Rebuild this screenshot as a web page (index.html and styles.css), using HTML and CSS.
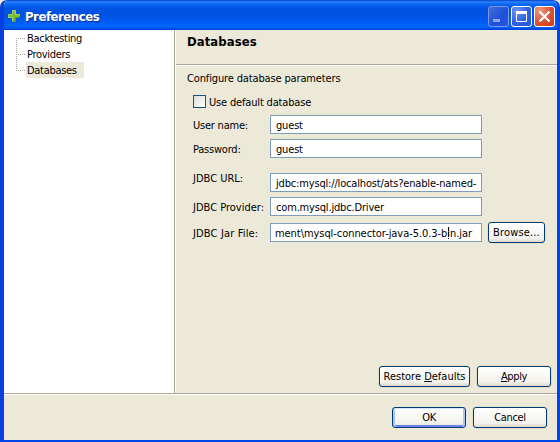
FILE: index.html
```
<!DOCTYPE html>
<html lang="en">
<head>
<meta charset="utf-8">
<title>Preferences</title>
<link rel="stylesheet" href="styles.css">
</head>
<body>
<div class="window">
  <header class="titlebar">
    <svg class="logo" width="12" height="12" viewBox="0 0 12 12"><path d="M4.5 .5h3v4h4v3h-4v4h-3v-4h-4v-3h4z" fill="#79bd37" stroke="#a2d466"/><path d="M5 11.5h2.5v-4h4V6" fill="none" stroke="#4c8e36"/></svg>
    <h1>Preferences</h1>
    <div class="controls">
      <span class="control disabled"><svg width="21" height="21"><rect x="5" y="13" width="7" height="3" fill="#91a6ee"/></svg></span>
      <span class="control"><svg width="21" height="21"><path d="M5.5 6v9.5h10V6" fill="none" stroke="#fff"/><path d="M5 5h11v3H5z" fill="#fff"/></svg></span>
      <span class="control close"><svg width="21" height="21"><path d="M5.5 5.5l10 10m0-10l-10 10" stroke="#fff" stroke-width="2.2"/></svg></span>
    </div>
  </header>
  <div class="main">
    <nav class="tree">
      <div class="node first"><span>Backtesting</span></div>
      <div class="node"><span>Providers</span></div>
      <div class="node last"><span class="selected">Databases</span></div>
    </nav>
    <section class="page">
      <h2>Databases</h2>
      <div class="body">
        <p class="intro">Configure database parameters</p>
        <div class="check"><i class="box"></i><span>Use default database</span></div>
        <div class="row user"><label>User name:</label><div class="field">guest</div></div>
        <div class="row pass"><label>Password:</label><div class="field">guest</div></div>
        <div class="row url"><label>JDBC URL:</label><div class="field">jdbc:mysql://localhost/ats?enable-named-</div></div>
        <div class="row prov"><label>JDBC Provider:</label><div class="field">com.mysql.jdbc.Driver</div></div>
        <div class="row jar"><label>JDBC Jar File:</label><div class="field">ment\mysql-connector-java-5.0.3-bin.jar<i class="caret"></i></div><div class="button browse">Browse...</div></div>
        <div class="actions"><div class="button restore">Restore <u>D</u>efaults</div><div class="button"><u>A</u>pply</div></div>
      </div>
    </section>
  </div>
  <footer><div class="button default">OK</div><div class="button">Cancel</div></footer>
</div>
</body>
</html>
```
FILE: styles.css
```
* { box-sizing: border-box; }
body { margin: 0; background: #ece9d8; font: 11px/16px "DejaVu Sans Condensed", "DejaVu Sans", sans-serif; font-stretch: condensed; color: #000; letter-spacing: -.35px; }
h1, h2, p { margin: 0; }
.window { width: 560px; height: 442px; display: flex; flex-direction: column; overflow: hidden; background: #ece9d8; border: solid #0045e6; border-width: 0 3px 2px 4px; border-left-color: #0a3fdf; border-radius: 7px 7px 0 0; }
.titlebar { height: 30px; flex: none; margin: 0 -3px 0 -4px; padding: 6px 5px 0 8px; display: flex; background: linear-gradient(#0043d0 0, #2e83f7 2px, #0a6af5 4px, #0054e5 8px, #0053e0 15px, #005cf5 22px, #0066ff 26px, #005af0 28px, #003dd7 30px); }
.logo { margin-top: 4px; }
h1 { margin-left: 5px; font: bold 13px/21px "DejaVu Sans Condensed", "DejaVu Sans", sans-serif; font-stretch: condensed; letter-spacing: -.45px; color: #fff; text-shadow: 1px 1px #0a2f99; }
.controls { margin-left: auto; display: flex; gap: 2px; }
.control { position: relative; width: 21px; height: 21px; border: 1px solid #fff; border-radius: 3px; background: radial-gradient(circle at 25% 20%, #7195f0, #2f60df 55%, #2459dc); }
.control svg { position: absolute; left: -1px; top: -1px; }
.disabled { border-color: #8197e6; background: linear-gradient(135deg, #456edd, #1c4fd9 60%, #2859e0); }
.close { background: radial-gradient(circle at 25% 20%, #ed9a83, #dc5030 55%, #cf3c17); }
.main { height: 363px; display: flex; }
.tree { width: 171px; flex: none; background: #fff; border-right: 1px solid #aca899; padding-left: 12px; }
.node { height: 16px; display: flex; background: repeating-linear-gradient(90deg, #aca899 0 1px, transparent 1px 2px) 0 8px / 10px 1px no-repeat, repeating-linear-gradient(#aca899 0 1px, transparent 1px 2px) 0 0 / 1px 16px no-repeat; padding-left: 10px; line-height: 18px; letter-spacing: -.3px; }
.first { background-position: 0 8px, 0 8px; }
.last { background-size: 10px 1px, 1px 8px; }
.node span { height: 16px; padding-left: 1px; }
.node .selected { width: 58px; background: #ece9d8; }
.page { flex: 1; border-left: 1px solid #fff; }
h2 { height: 35px; border-bottom: 1px solid #aca899; box-shadow: 0 1px #fff; padding: 4px 0 0 11px; font: bold 13px/16px "DejaVu Sans Condensed", "DejaVu Sans", sans-serif; font-stretch: condensed; letter-spacing: .05px; }
.body { padding: 5px 6px 0 11px; }
.intro { height: 16px; line-height: 18px; letter-spacing: -.14px; }
.check { display: flex; gap: 3px; height: 16px; margin: 8px 0 5px 6px; line-height: 18px; letter-spacing: -.17px; }
.box { width: 13px; height: 13px; margin-top: 1px; border: 1px solid #1c5180; background: linear-gradient(135deg, #dcdcd7, #fff); }
.row { display: flex; height: 19px; margin: 0 0 5px 6px; }
.row label { width: 77px; height: 19px; line-height: 21px; letter-spacing: -.22px; }
.row.url { margin-top: 15px; }
.row.url label { line-height: 11px; letter-spacing: 0; }
.row.prov label { letter-spacing: 0; }
.row.jar label { letter-spacing: .15px; }
.row.jar { margin-top: 7px; }
.field { position: relative; width: 212px; height: 19px; flex: none; border: 1px solid #7f9db9; background: #fff; padding-left: 5px; line-height: 19px; white-space: nowrap; letter-spacing: -.17px; }
.jar .field { letter-spacing: -.06px; padding-left: 4px; }
.caret { position: absolute; left: 177px; top: 3px; width: 1px; height: 12px; background: linear-gradient(#000 4px, transparent 4px 5px, #000 5px 10px, transparent 10px 11px, #000 11px); }
.button { width: 74px; height: 21px; border: 1px solid #003c74; border-radius: 3px; background: linear-gradient(#fff, #f3f2ec 80%, #dcd6cb); text-align: center; line-height: 20px; white-space: nowrap; box-shadow: 0 0 0 1px #e3dfce; }
.browse { width: 57px; margin: -1px 0 0 6px; letter-spacing: .15px; }
.actions { display: flex; justify-content: flex-end; gap: 7px; margin-top: 124px; }
.restore { width: 91px; letter-spacing: 0; }
footer { flex: 1; border-top: 1px solid #aca899; box-shadow: inset 0 1px #fff; padding: 13px 10px 0; display: flex; justify-content: flex-end; gap: 7px; }
.default { box-shadow: inset 0 1px #cee7ff, inset 2px 0 #a6c5f5, inset -2px 0 #a6c5f5, inset 0 -2px #6982ee; }
```
